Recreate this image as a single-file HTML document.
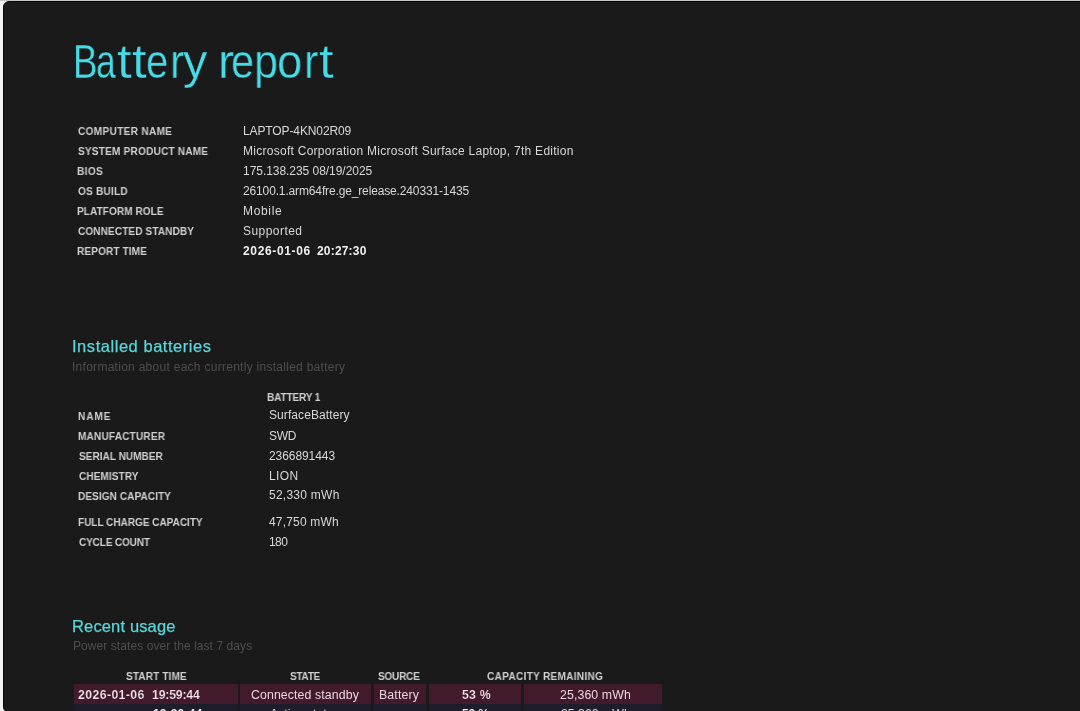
<!DOCTYPE html>
<html><head><meta charset="utf-8"><style>
html,body{margin:0;padding:0;width:1080px;height:711px;overflow:hidden;background:#f4f4f4;}
body{font-family:"Liberation Sans",sans-serif;position:relative;}
#topstrip{position:absolute;left:0;top:0;width:1080px;height:1px;background:#c6c6c6;}
#win{position:absolute;left:3.3px;top:0.5px;width:1090px;height:712.5px;background:#1a1a1a;border-radius:6px;border:1px solid #0a0a0a;box-sizing:border-box;}
.e{position:absolute;white-space:nowrap;line-height:1;margin:0;will-change:transform;}
.h1{position:absolute;left:0;top:38px;font-size:48px;line-height:1;color:#45dce8;-webkit-text-stroke:0.35px #1a1a1a;}
.tl{position:absolute;top:0;transform-origin:0 0;will-change:transform;}
.lab{font-size:10.6px;font-weight:bold;color:#d0d0d0;transform:scaleX(0.95);transform-origin:0 0;}
.val{font-size:12px;color:#d8d8d8;}
.b{font-weight:bold;}
.h2{font-size:16.5px;color:#5ad6da;-webkit-text-stroke:0.25px #5ad6da;}
.sub{font-size:12px;color:#4e4e4e;}
.rv{font-size:12.3px;color:#ead6e0;}
.rv.b{-webkit-text-stroke:0.15px rgb(65,26,44);color:#f4e4ec;}
.val.b{color:#f0f0f0;}
.cell{position:absolute;}
</style></head><body>
<div id="topstrip"></div><div id="win"></div>
<div class="cell" style="left:74.3px;top:684px;width:163.4px;height:19.6px;background:rgb(65, 26, 44)"></div>
<div class="cell" style="left:74.3px;top:704px;width:163.4px;height:10px;background:rgb(29, 29, 43)"></div>
<div class="cell" style="left:240.2px;top:684px;width:131.3px;height:19.6px;background:rgb(65, 26, 44)"></div>
<div class="cell" style="left:240.2px;top:704px;width:131.3px;height:10px;background:rgb(29, 29, 43)"></div>
<div class="cell" style="left:373.6px;top:684px;width:52.2px;height:19.6px;background:rgb(65, 26, 44)"></div>
<div class="cell" style="left:373.6px;top:704px;width:52.2px;height:10px;background:rgb(29, 29, 43)"></div>
<div class="cell" style="left:429.3px;top:684px;width:91.4px;height:19.6px;background:rgb(65, 26, 44)"></div>
<div class="cell" style="left:429.3px;top:704px;width:91.4px;height:10px;background:rgb(29, 29, 43)"></div>
<div class="cell" style="left:524.2px;top:684px;width:137.7px;height:19.6px;background:rgb(65, 26, 44)"></div>
<div class="cell" style="left:524.2px;top:704px;width:137.7px;height:10px;background:rgb(29, 29, 43)"></div>
<div id="e0" class="e lab" style="left:77.80px;top:126.00px;letter-spacing:0.346px;">COMPUTER NAME</div>
<div id="e1" class="e lab" style="left:77.80px;top:146.00px;letter-spacing:0.218px;">SYSTEM PRODUCT NAME</div>
<div id="e2" class="e lab" style="left:76.60px;top:166.00px;letter-spacing:0.393px;">BIOS</div>
<div id="e3" class="e lab" style="left:77.80px;top:186.00px;letter-spacing:0.233px;">OS BUILD</div>
<div id="e4" class="e lab" style="left:76.60px;top:206.00px;letter-spacing:0.057px;">PLATFORM ROLE</div>
<div id="e5" class="e lab" style="left:77.80px;top:226.00px;letter-spacing:0.103px;">CONNECTED STANDBY</div>
<div id="e6" class="e lab" style="left:76.60px;top:246.00px;letter-spacing:0.118px;">REPORT TIME</div>
<div id="e7" class="e val" style="left:243.30px;top:124.60px;letter-spacing:-0.111px;">LAPTOP-4KN02R09</div>
<div id="e8" class="e val" style="left:243.30px;top:144.60px;letter-spacing:0.269px;">Microsoft Corporation Microsoft Surface Laptop, 7th Edition</div>
<div id="e9" class="e val" style="left:243.30px;top:164.60px;letter-spacing:-0.044px;">175.138.235 08/19/2025</div>
<div id="e10" class="e val" style="left:243.30px;top:184.60px;letter-spacing:-0.142px;">26100.1.arm64fre.ge_release.240331-1435</div>
<div id="e11" class="e val" style="left:243.30px;top:204.60px;letter-spacing:0.655px;">Mobile</div>
<div id="e12" class="e val" style="left:243.30px;top:225.18px;letter-spacing:0.455px;">Supported</div>
<div id="e13" class="e val b" style="left:242.96px;top:244.57px;letter-spacing:0.655px;">2026-01-06</div>
<div id="e14" class="e val b" style="left:317.26px;top:244.60px;letter-spacing:0.185px;">20:27:30</div>
<div id="e15" class="e h2" style="left:72.22px;top:338.20px;letter-spacing:0.539px;">Installed batteries</div>
<div id="e16" class="e sub" style="left:71.59px;top:361.45px;letter-spacing:0.276px;">Information about each currently installed battery</div>
<div id="e17" class="e lab" style="left:267.20px;top:392.10px;letter-spacing:-0.153px;">BATTERY 1</div>
<div id="e18" class="e lab" style="left:78.27px;top:411.00px;letter-spacing:0.994px;">NAME</div>
<div id="e19" class="e lab" style="left:78.27px;top:431.40px;letter-spacing:0.195px;">MANUFACTURER</div>
<div id="e20" class="e lab" style="left:78.50px;top:450.90px;letter-spacing:0.015px;">SERIAL NUMBER</div>
<div id="e21" class="e lab" style="left:78.50px;top:471.30px;letter-spacing:0.065px;">CHEMISTRY</div>
<div id="e22" class="e lab" style="left:78.30px;top:490.80px;letter-spacing:0.072px;">DESIGN CAPACITY</div>
<div id="e23" class="e lab" style="left:78.30px;top:517.20px;letter-spacing:-0.047px;">FULL CHARGE CAPACITY</div>
<div id="e24" class="e lab" style="left:78.50px;top:537.00px;letter-spacing:-0.176px;">CYCLE COUNT</div>
<div id="e25" class="e val" style="left:268.80px;top:409.10px;letter-spacing:0.088px;">SurfaceBattery</div>
<div id="e26" class="e val" style="left:268.80px;top:430.00px;letter-spacing:-0.350px;">SWD</div>
<div id="e27" class="e val" style="left:268.80px;top:449.80px;letter-spacing:-0.075px;">2366891443</div>
<div id="e28" class="e val" style="left:268.80px;top:469.60px;letter-spacing:0.351px;">LION</div>
<div id="e29" class="e val" style="left:268.80px;top:489.10px;letter-spacing:0.253px;">52,330 mWh</div>
<div id="e30" class="e val" style="left:269.28px;top:516.10px;letter-spacing:0.170px;">47,750 mWh</div>
<div id="e31" class="e val" style="left:268.80px;top:535.67px;letter-spacing:-0.566px;">180</div>
<div id="e32" class="e h2" style="left:72.08px;top:618.10px;letter-spacing:0.148px;">Recent usage</div>
<div id="e33" class="e sub" style="left:72.80px;top:639.90px;letter-spacing:0.075px;">Power states over the last 7 days</div>
<div id="e34" class="e lab" style="left:126.30px;top:671.00px;letter-spacing:0.129px;">START TIME</div>
<div id="e35" class="e lab" style="left:290.10px;top:671.00px;letter-spacing:-0.319px;">STATE</div>
<div id="e36" class="e lab" style="left:378.30px;top:671.00px;letter-spacing:-0.264px;">SOURCE</div>
<div id="e37" class="e lab" style="left:486.90px;top:671.00px;letter-spacing:0.309px;">CAPACITY REMAINING</div>
<div id="e38" class="e rv b" style="left:78.18px;top:688.84px;letter-spacing:0.386px;">2026-01-06</div>
<div id="e39" class="e rv b" style="left:151.90px;top:688.90px;letter-spacing:-0.202px;">19:59:44</div>
<div id="e40" class="e rv" style="left:250.91px;top:688.59px;letter-spacing:0.117px;">Connected standby</div>
<div id="e41" class="e rv" style="left:378.81px;top:688.80px;letter-spacing:0.144px;">Battery</div>
<div id="e42" class="e rv b" style="left:461.80px;top:688.90px;letter-spacing:0.197px;">53 %</div>
<div id="e43" class="e rv" style="left:560.40px;top:688.90px;letter-spacing:0.111px;">25,360 mWh</div>

<div class="e rv b" style="left:152.6px;top:708px;color:#f0f0f0">19:30:44</div>
<div class="e rv" style="left:270px;top:708px;color:#d8d8d8">Active state</div>
<div class="e rv b" style="left:462.4px;top:708px;color:#f0f0f0;letter-spacing:-0.3px">53 %</div>
<div class="e rv" style="left:561.2px;top:708px;color:#d8d8d8">25,360 mWh</div>
<div class="h1"><span class="tl" style="left:72.57px;transform:scaleX(0.766)">B</span><span class="tl" style="left:96.25px;transform:scaleX(0.738)">a</span><span class="tl" style="left:117.33px;transform:scaleX(1.100)">t</span><span class="tl" style="left:132.23px;transform:scaleX(1.100)">t</span><span class="tl" style="left:145.96px;transform:scaleX(0.833)">e</span><span class="tl" style="left:169.67px;transform:scaleX(0.888)">r</span><span class="tl" style="left:182.63px;transform:scaleX(1.015)">y</span><span class="tl" style="left:217.82px;transform:scaleX(1.004)">r</span><span class="tl" style="left:231.40px;transform:scaleX(0.863)">e</span><span class="tl" style="left:253.84px;transform:scaleX(0.898)">p</span><span class="tl" style="left:277.34px;transform:scaleX(0.946)">o</span><span class="tl" style="left:304.44px;transform:scaleX(0.896)">r</span><span class="tl" style="left:318.93px;transform:scaleX(1.100)">t</span></div>
</body></html>
